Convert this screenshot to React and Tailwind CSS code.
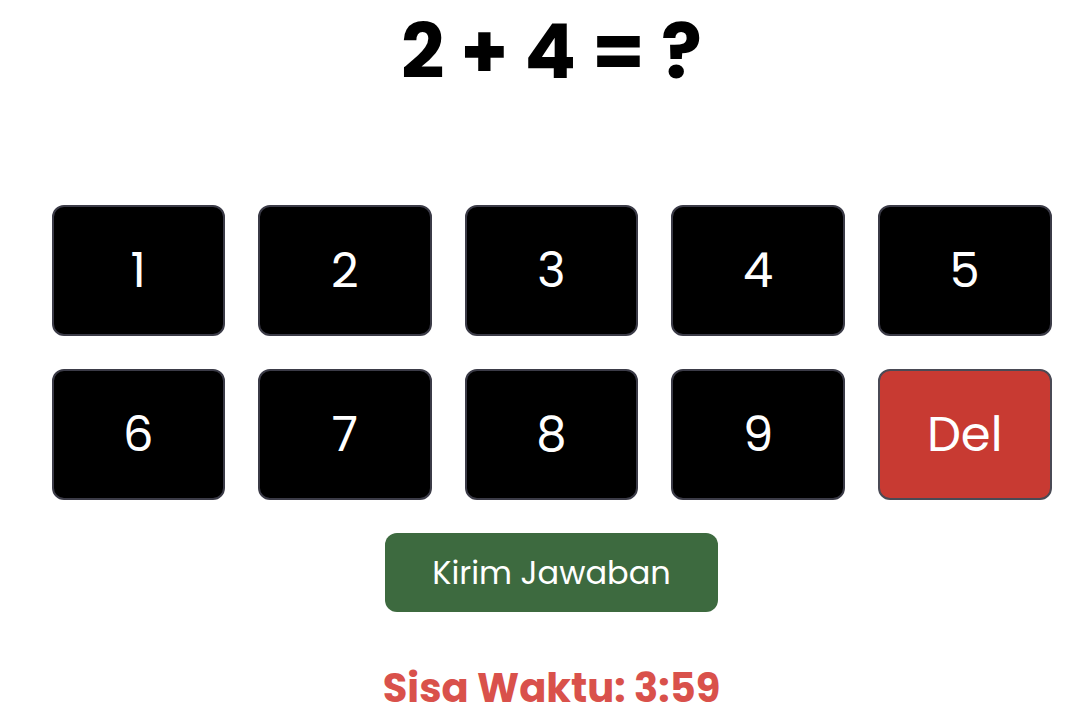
export default function App() {
	const keys = ["1", "2", "3", "4", "5", "6", "7", "8", "9"];

	return (
		<div
			className="min-h-screen bg-white pl-4 flex flex-col items-center"
			style={{ fontFamily: "Poppins, 'Open Sans', sans-serif" }}
		>
			<h1 className="mt-[14px] text-[76px] font-bold leading-none text-black">
				2 + 4 = ?
			</h1>
			<div className="mt-[115px] grid grid-cols-5 gap-[33px] w-[1000px]">
				{keys.map((k) => (
					<button
						key={k}
						className="h-[131px] bg-black text-white text-[48px] rounded-xl border-2 border-[#3b3b47] flex items-center justify-center"
					>
						{k}
					</button>
				))}
				<button className="h-[131px] bg-[#c83a32] text-white text-[48px] rounded-xl border-2 border-[#4a4a55] flex items-center justify-center">
					Del
				</button>
			</div>
			<button className="mt-[33px] w-[333px] h-[79px] bg-[#3d6a3f] text-white text-[32px] rounded-xl">
				Kirim Jawaban
			</button>
			<p className="mt-[56px] text-[40px] font-bold text-[#d9514b] leading-none">
				Sisa Waktu: 3:59
			</p>
		</div>
	);
}
